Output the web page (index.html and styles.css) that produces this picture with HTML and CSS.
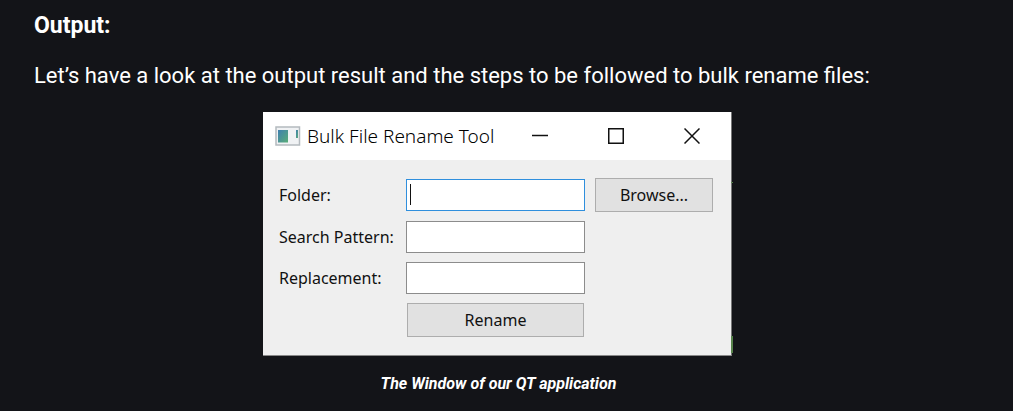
FILE: index.html
```html
<!DOCTYPE html>
<html lang="en">
<head>
<meta charset="utf-8">
<title>Bulk File Rename Tool</title>
<link rel="stylesheet" href="styles.css">
</head>
<body>
<main class="article">
  <h2 class="heading">Output:</h2>
  <p class="lead">Let’s have a look at the output result and the steps to be followed to bulk rename files:</p>
  <figure class="figure">
    <div class="window">
      <header class="titlebar">
        <svg class="app-icon" width="26" height="20" viewBox="0 0 26 20" aria-hidden="true">
          <defs><linearGradient id="pane" x1="0" y1="0" x2="1" y2="1"><stop offset="0" stop-color="#3f7fb0"/><stop offset="1" stop-color="#59ad78"/></linearGradient></defs>
          <rect x="1" y="1" width="23.5" height="18" fill="#f0f2f4" stroke="#b4babf" stroke-width="1.5"/>
          <rect x="3" y="4" width="10" height="12.5" fill="url(#pane)"/>
          <rect x="21" y="4" width="2" height="8" fill="url(#pane)"/>
        </svg>
        <span class="title">Bulk File Rename Tool</span>
        <button class="control" aria-label="Minimize"><svg width="16" height="16" viewBox="0 0 16 16"><path d="M0 7.5H16"/></svg></button>
        <button class="control" aria-label="Maximize"><svg width="16" height="16" viewBox="0 0 16 16"><path d="M.75 .75H15.25V15.25H.75Z"/></svg></button>
        <button class="control" aria-label="Close"><svg width="16" height="16" viewBox="0 0 16 16"><path d="M.5 .5L15.5 15.5M15.5 .5L.5 15.5"/></svg></button>
      </header>
      <form class="form">
        <label class="label" for="folder">Folder:</label>
        <div class="field"><input class="input input-active" id="folder" type="text"><span class="caret"></span></div>
        <button class="button" type="button">Browse...</button>
        <label class="label row-start" for="search">Search Pattern:</label>
        <input class="input" id="search" type="text">
        <label class="label row-start" for="replacement">Replacement:</label>
        <input class="input" id="replacement" type="text">
        <button class="button rename" type="button">Rename</button>
      </form>
      <span class="edge edge-top"></span>
      <span class="edge edge-bottom"></span>
    </div>
    <figcaption class="caption">The Window of our QT application</figcaption>
  </figure>
</main>
</body>
</html>
```
FILE: styles.css
```css
* { box-sizing: border-box; }
body {
  margin: 0;
  background: #131418;
  color: #fff;
  font-family: Roboto, "Liberation Sans", sans-serif;
}
.article { padding: 9px 34px 0; }
.heading { margin: 0; font-size: 23px; line-height: 34px; font-weight: 700; }
.lead { margin: 16px 0 0; font-size: 22px; line-height: 34px; }
.figure {
  margin: 19px 0 0;
  display: flex;
  flex-direction: column;
  align-items: center;
}
.window {
  position: relative;
  width: 469px;
  max-width: 100%;
  margin-right: 18px;
  background: #efefef;
  border-right: 1px solid #777;
  border-bottom: 1px solid #888;
  color: #111;
  font-family: "Noto Sans", sans-serif;
}
.titlebar {
  display: flex;
  align-items: center;
  height: 48px;
  padding-left: 12px;
  padding-right: 1px;
  background: #fff;
}
.app-icon { margin-right: 6px; }
.title {
  flex: 1;
  font-size: 19px;
  font-weight: 300;
  color: #000;
  white-space: nowrap;
}
.control {
  width: 76px;
  height: 48px;
  padding: 0;
  border: 0;
  background: none;
  display: grid;
  place-items: center;
}
.control path { fill: none; stroke: #111; stroke-width: 1.5; }
.form {
  display: grid;
  grid-template-columns: 117px 179px 118px;
  column-gap: 10px;
  row-gap: 9px;
  align-items: center;
  padding: 18px 18px 18px 16px;
}
.label { font-size: 16px; line-height: 24px; white-space: nowrap; }
.field { position: relative; display: flex; }
.input {
  width: 100%;
  height: 32px;
  padding: 0 6px;
  border: 1px solid #8c8c8c;
  background: #fff;
  font: inherit;
  outline: 0;
}
.input-active { border-color: #2f8fdd; }
.caret {
  position: absolute;
  left: 4px;
  top: 5px;
  width: 1px;
  height: 21px;
  background: #111;
}
.button {
  height: 34px;
  padding: 0;
  border: 1px solid #adadad;
  background: #e1e1e1;
  color: #111;
  font: inherit;
  font-size: 16px;
}
.row-start { grid-column: 1; }
.rename { grid-column: 2; margin: 0 1px; }
.edge { position: absolute; left: 100%; width: 2px; background: #57834b; }
.edge-top { top: 70px; height: 1px; }
.edge-bottom { bottom: 2px; height: 17px; }
.caption {
  margin: 16px 16px 0 0;
  font-size: 16px;
  line-height: 24px;
  font-weight: 700;
  font-style: italic;
}
```
